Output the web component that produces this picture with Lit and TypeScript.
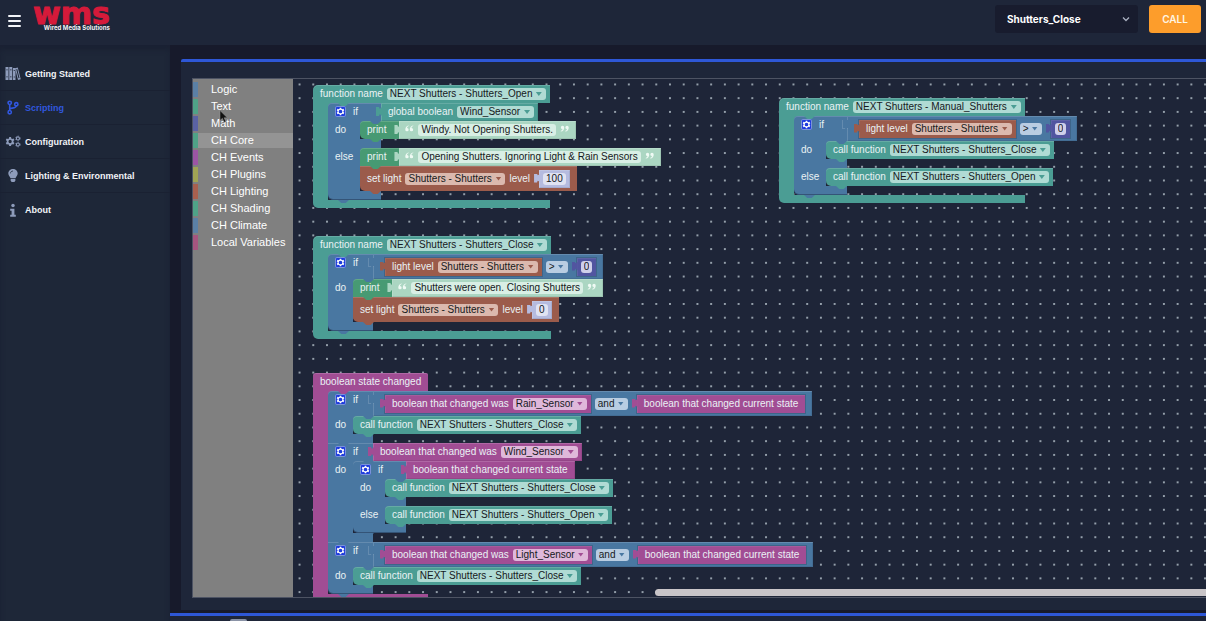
import { LitElement, html, svg, css, type TemplateResult } from "lit";
import { customElement, state } from "lit/decorators.js";

type Part = TemplateResult | string;

/* ---------- block fields ---------- */

const label = (text: string) => html`<span class="label">${text}</span>`;

const field = (value: string, name: string) => html`
  <span class="field"><select aria-label=${name}><option>${value}</option></select></span>`;

const entry = (value: string, name: string) =>
  html`<input class="entry" type="text" aria-label=${name} .value=${value} />`;

const quote = (closing = false) => html`
  <svg class="quote" viewBox="0 0 16 12" aria-hidden="true">
    <g transform=${closing ? "rotate(180 8 6)" : ""}>
      ${svg`<path d="M6.5 0.5C2.5 1.5 0.5 4 0.5 8a3 3 0 1 0 3-3C3.9 3.4 4.9 2.3 6.8 1.6zM14.5 0.5c-4 1-6 3.500-6 7.500a3 3 0 1 0 3-3c.4-1.600 1.400-2.700 3.300-3.400z"/>`}
    </g>
  </svg>`;

const cog = html`
  <button class="cog" type="button" aria-label="Edit branches">
    <svg viewBox="0 0 16 16" aria-hidden="true">
      <path fill="#fff" fill-rule="evenodd" d="M6.900 2h2.200l.4 1.700 1 .5 1.700-.600 1.300 2-1.200 1.300v1.200l1.200 1.300-1.300 2-1.700-.600-1 .5-.4 1.700H6.900l-.4-1.700-1-.5-1.700.6-1.300-2 1.200-1.300V6.900L2.500 5.600l1.300-2 1.700.6 1-.5zM8 4.800a2.700 2.700 0 1 0 0 5.400 2.700 2.700 0 0 0 0-5.400z" transform="translate(0 .5)"/>
    </svg>
  </button>`;

/* ---------- blocks ---------- */

const value = (hue: string, kind: string, ...parts: Part[]) =>
  html`<div class="value ${hue} ${kind}">${parts}</div>`;

const num = (v: string, hue = "indigo") => value(hue, "num", entry(v, "number"));

const lightLevel = () =>
  value("brown", "", label("light level"), field("Shutters - Shutters", "light"));

const wasChanged = (sensor: string) =>
  value("magenta", "", label("boolean that changed was"), field(sensor, "boolean"));

const currentState = () =>
  value("magenta", "plain", label("boolean that changed current state"));

const compare = (left: Part, op: string, right: Part) =>
  value("blue", "compare", left, field(op, "operator"), right);

const call = (fn: string) => html`
  <div class="stmt teal">${label("call function")}${field(fn, "function")}</div>`;

const print = (text: string) => html`
  <div class="joined">
    <div class="stmt green print">${label("print")}</div>
    <div class="value mint text">${quote()}${entry(text, "text")}${quote(true)}</div>
  </div>`;

const setLight = (v: string) => html`
  <div class="stmt brown tall">
    ${label("set light")}${field("Shutters - Shutters", "light")}${label("level")}${num(v, "lavender")}
  </div>`;

const ifBlock = (cond: Part, doPart: Part[], elsePart?: Part[]) => {
  const branch = (name: string, parts: Part[]) => html`
    <div class="branch"><span class="arm">${name}</span><div class="stack">${parts}</div></div>
    <div class="strip"></div>`;
  return html`
    <div class="if ${elsePart ? "wide" : ""}">
      <div class="joined"><div class="if-head">${cog}<span class="label">if</span></div>${cond}</div>
      ${branch("do", doPart)}${elsePart ? branch("else", elsePart) : ""}
    </div>`;
};

const hat = (hue: string, place: string, head: Part[], body: Part[]) => html`
  <section class="hat ${hue} ${place}">
    <div class="hat-head">${head}</div>
    <div class="hat-body"><div class="hat-arm"></div><div class="stack">${body}</div></div>
    <div class="hat-foot"></div>
  </section>`;

const fn = (place: string, name: string, body: Part[]) =>
  hat("teal", place, [label("function name"), field(name, "function name")], body);

const CLOSE = "NEXT Shutters - Shutters_Close";
const OPEN = "NEXT Shutters - Shutters_Open";

/* ---------- navigation icons ---------- */

const icons: Record<string, TemplateResult> = {
  books: html`<svg viewBox="0 0 32 28" fill="currentColor"><path fill-rule="evenodd" d="M1 1h6v26H1zM2.500 6v1.500h3V6zm0 14v1.500h3V20zM8.500 1h6v26h-6zM10 6v1.500h3V6zm0 14v1.500h3V20z"/><path fill-rule="evenodd" d="M16 3h5v24h-5zm1.500 4v2h2V7zm0 13v2h2v-2z"/><path fill-rule="evenodd" d="M20 3.500 25.500 2 31.500 25.500 26 27zM22.500 5.500 27 23.500l2-.5L24.500 5z"/></svg>`,
  branch: html`<svg viewBox="0 0 28 32" fill="none" stroke="currentColor" stroke-width="3.400"><circle cx="7" cy="6" r="3.500"/><circle cx="7" cy="26" r="3.500"/><circle cx="21" cy="9" r="3.500"/><path d="M7 9.500v13M7 20c0-4 14-1 14-7.500"/></svg>`,
  cogs: html`<svg viewBox="0 0 36 28" fill="currentColor"><path fill-rule="evenodd" d="M9.500 4h4l.7 3 2 1.100 3-.9 2 3.500-2.300 2.200v2.300l2.300 2.200-2 3.500-3-.9-2 1.100-.7 3h-4l-.7-3-2-1.100-3 .9-2-3.500 2.300-2.200v-2.300L1.800 10.700l2-3.500 3 .9 2-1.100zM11.500 10.300a3.700 3.700 0 1 0 0 7.400 3.700 3.700 0 0 0 0-7.400z"/><g fill="none" stroke="currentColor"><circle cx="29" cy="7" r="3.500" stroke-width="2.500"/><circle cx="29" cy="21" r="3.500" stroke-width="2.500"/><circle cx="29" cy="7" r="5.300" stroke-width="1.600" stroke-dasharray="2.500 3"/><circle cx="29" cy="21" r="5.300" stroke-width="1.600" stroke-dasharray="2.500 3"/></g></svg>`,
  bulb: html`<svg viewBox="0 0 28 32" fill="currentColor"><path d="M14 2c5.500 0 10 4.300 10 9.700 0 4.300-3.500 6.300-4.700 10.300H8.700C7.500 18 4 16 4 11.700 4 6.300 8.500 2 14 2z"/><path d="M9 23.500h10v3L17 30h-6l-2-3.500z"/><path d="M8.500 11.500c0-3 2.500-5 5.500-5" fill="none" stroke="#1e2738" stroke-width="1.600"/></svg>`,
  info: html`<svg viewBox="0 0 28 32" fill="currentColor"><circle cx="14" cy="5.500" r="3.700"/><path d="M8 12h9v13h3v4.500H8V25h3v-8.500H8z"/></svg>`,
};

const NAV = [
  ["books", "Getting Started"],
  ["branch", "Scripting"],
  ["cogs", "Configuration"],
  ["bulb", "Lighting & Environmental"],
  ["info", "About"],
];

const CATEGORIES = [
  ["c-blue", "Logic"],
  ["c-green", "Text"],
  ["c-indigo", "Math"],
  ["c-green", "CH Core"],
  ["c-purple", "CH Events"],
  ["c-olive", "CH Plugins"],
  ["c-red", "CH Lighting"],
  ["c-green", "CH Shading"],
  ["c-blue", "CH Climate"],
  ["c-rose", "Local Variables"],
];

@customElement("app-root")
export class AppRoot extends LitElement {
  @state() private page = "Scripting";
  @state() private category = "CH Core";

  static styles = css`
    :host {
      display: flex;
      flex-direction: column;
      height: 100vh;
      overflow: hidden;
      background: #171a2b;
      color: #fff;
      font: 10px/18px "Liberation Sans", Arial, sans-serif;
    }
    *, *::before, *::after { box-sizing: border-box; }
    button, select, input { font: inherit; color: inherit; border: 0; margin: 0; padding: 0; }
    select { appearance: none; cursor: pointer; }
    svg { display: block; }

    /* top bar */
    .top {
      display: flex;
      align-items: flex-start;
      flex: 0 0 45px;
      padding: 5px 5px 0 8px;
      background: #1e2639;
    }
    .menu { display: grid; gap: 2px; width: 13px; margin-top: 10px; background: none; }
    .menu i { height: 2px; background: #f2f4f8; border-radius: 1px; }
    .menu i + i { margin-top: 1px; }
    .logo { margin: 0 auto 0 12px; display: grid; }
    .logo b {
      height: 20px;
      font: bold 30px/18px "DejaVu Sans", sans-serif;
      color: #d51a3a;
      -webkit-text-stroke: 1px #d51a3a;
    }
    .logo small { font: 700 6px/6px Inter, sans-serif; color: #f3f3f6; text-align: right; }
    .picker { position: relative; width: 143px; margin-right: 11px; }
    .picker select {
      width: 100%;
      height: 28px;
      padding: 0 24px 0 12px;
      border-radius: 3px;
      background: #181c2e;
      font: 700 10px Inter, sans-serif;
    }
    .picker svg { position: absolute; right: 8px; top: 10px; width: 8px; height: 8px; pointer-events: none; }
    .run {
      width: 52px;
      height: 28px;
      border-radius: 3px;
      background: #fd9d2b;
      font: 600 10px Inter, sans-serif;
      color: #fff5e2;
    }

    .page { display: flex; flex: 1; min-height: 0; }

    /* side navigation */
    nav { flex: 0 0 170px; padding-top: 12px; background: #1e2738; box-shadow: inset 0 5px 5px #1a2133; }
    nav a {
      display: flex;
      align-items: center;
      gap: 4px;
      height: 34px;
      padding-left: 5px;
      border-bottom: 1px solid #1a2132;
      color: #f1f3f7;
      font-weight: bold;
      font-size: 9px;
      text-decoration: none;
    }
    nav a:last-child { border-bottom: 0; }
    nav svg { width: 16px; height: 15px; color: #8e9cbb; }
    nav a.on, nav a.on svg { color: #3157de; }

    /* main panel */
    main { display: flex; flex-direction: column; flex: 1; min-width: 0; padding-top: 14px; }
    .card {
      display: flex;
      flex: 1;
      min-height: 0;
      margin: 0 0 3px 11px;
      padding: 16px 0 12px 11px;
      border-top: 3px solid #2e57d6;
      background: #1e2639;
      border-radius: 2px 0 0 0;
    }
    .next { display: flex; flex: 0 0 8px; padding: 3px 0 0 60px; border-top: 3px solid #2e57d6; background: #1e2538; }
    .next i { width: 17px; background: #8b93a6; border-radius: 2px 2px 0 0; }

    .editor { display: flex; flex: 1; min-width: 0; border: 1px solid #4d5363; border-right: 0; }
    .toolbox { position: relative; flex: 0 0 100px; padding-top: 3px; background: #808080; }
    .toolbox button {
      display: block;
      width: 100%;
      height: 15px;
      margin-bottom: 2px;
      padding-left: 13px;
      border-left: 5px solid var(--tint);
      background: none;
      font-size: 11px;
      line-height: 15px;
      text-align: left;
      white-space: nowrap;
    }
    .toolbox button.on { background: #949494; }
    .c-blue { --tint: #5b80a5; }
    .c-green { --tint: #4fa287; }
    .c-indigo { --tint: #5a62a4; }
    .c-purple { --tint: #9c55a4; }
    .c-olive { --tint: #a0a454; }
    .c-red { --tint: #a8604f; }
    .c-rose { --tint: #a5557f; }
    .pointer { position: absolute; left: 26px; top: 31px; width: 9px; height: 13px; }

    .canvas { position: relative; flex: 1; min-width: 0; overflow: hidden; background: #1e2538; }
    .grid { position: absolute; inset: 0; width: 100%; height: 100%; }
    .scroll {
      position: absolute;
      left: 362px;
      right: 0;
      bottom: 1px;
      height: 7px;
      border-radius: 4px 0 0 4px;
      background: #c9c5c8;
    }

    /* block colours */
    .teal { --c: #4b9d94; --f: #b0dbd4; }
    .green { --c: #479a73; --f: #d3ecdf; }
    .blue, .if { --c: #4977a1; --f: #b9cde2; }
    .brown { --c: #9b5b4b; --f: #dbb9ae; }
    .magenta { --c: #a14d94; --f: #dfb8da; }
    .indigo { --c: #5155a0; --f: #cfd0ea; }
    .lavender { --c: #b5bbdf; --f: #e0e3f2; }
    .mint { --c: #abd6c2; --f: #d9efe5; }

    /* block parts */
    .label { white-space: pre; color: #eaf2f4; }
    .field { position: relative; display: flex; }
    .field::after {
      content: "";
      position: absolute;
      right: 4px;
      top: 4px;
      width: 6px;
      height: 4px;
      background: var(--c);
      clip-path: polygon(0 0, 100% 0, 50% 100%);
    }
    .field select, .entry {
      height: 12px;
      border-radius: 3px;
      background: var(--f);
      color: #16191c;
      line-height: 12px;
    }
    .field select { padding: 0 13px 0 3px; }
    .entry { field-sizing: content; min-width: 0; padding: 0 3px; }
    .quote { width: 9px; height: 7px; margin-bottom: 3px; fill: #effaf4; }
    .cog { width: 11px; height: 11px; border-radius: 2px; background: #1d3bdd; box-shadow: 0 0 0 1px #7b93d8 inset; }
    .cog svg { width: 11px; height: 11px; }

    .joined { display: flex; align-items: flex-start; width: max-content; position: relative; }
    .value, .stmt { display: flex; align-items: center; gap: 4px; height: 18px; background: var(--c); }
    .value {
      position: relative;
      padding: 0 4px 0 7px;
      box-shadow: inset 1px 1px 0 #ffffff26, inset -1px -1px 0 #00000014;
    }
    .value::before {
      content: "";
      position: absolute;
      left: -5px;
      top: 4px;
      width: 6px;
      height: 9px;
      background: var(--c);
      clip-path: polygon(100% 0, 80% 15%, 60% 20%, 50% 0, 0 0, 0 100%, 50% 100%, 60% 80%, 80% 85%, 100% 100%);
    }
    .plain { padding-right: 7px; }
    .num { padding: 0 4px; margin-left: 5px; }
    .text { padding: 0 7px 0 6px; }
    .compare { height: 25px; padding: 0 7px 0 12px; }
    .compare .plain { margin-left: 5px; }
    .compare > .value { box-shadow: inset 1px 1px 0 #ffffff14, 0 0 0 1px #00000026; }
    .compare::before { background: #ffffff26; }
    .compare::after {
      content: "";
      position: absolute;
      left: -4px;
      top: 4px;
      width: 5px;
      height: 8px;
      background: var(--c);
    }

    .stmt {
      position: relative;
      width: max-content;
      padding: 0 4px 0 7px;
      box-shadow: inset 0 1px 0 #ffffff26;
    }
    .tall { height: 25px; padding-right: 7px; }
    .print { padding-right: 13px; }
    .stmt::after, .hat-head::after, .if-head::after, .if::after {
      content: "";
      position: absolute;
      z-index: 1;
      left: 10px;
      bottom: -3px;
      width: 11px;
      height: 3px;
      background: var(--c);
      clip-path: polygon(0 0, 100% 0, 70% 100%, 30% 100%);
    }
    .stack { flex: none; background: linear-gradient(var(--c), var(--c)) 0 0 / 6px 6px no-repeat; }
    .stack > :first-child, .stack > :first-child > .stmt { border-top-left-radius: 4px; }
    .stack > .stmt:last-child, .stack > .joined:last-child > .stmt { border-bottom-left-radius: 5px; }

    .if { position: relative; width: max-content; }
    .if-head {
      position: relative;
      display: flex;
      align-items: flex-start;
      align-self: stretch;
      gap: 7px;
      width: 45px;
      padding: 0 0 0 7px;
      background: var(--c);
      box-shadow: inset 0 1px 0 #ffffff26;
    }
    .if-head .cog { margin-top: 3px; }
    .if-head::after { left: 35px; }
    .if:first-child .if-head { border-top-left-radius: 4px; }
    .branch { display: flex; }
    .arm { flex: 0 0 25px; padding-left: 7px; background: var(--c); color: #eaf2f4; }
    .strip { width: 45px; height: 9px; background: var(--c); }
    .wide > .strip { width: 53px; }
    .wide > .joined > .if-head { width: 53px; }
    .wide > .joined > .if-head::after { left: 42px; }
    .wide > .branch > .arm { flex-basis: 32px; }
    .if:last-child > .strip:last-child { border-bottom-left-radius: 5px; box-shadow: inset 0 -1px 0 #16203a66; }

    .hat { position: absolute; display: grid; width: max-content; }
    .hat-head {
      position: relative;
      display: flex;
      align-items: center;
      gap: 4px;
      height: 18px;
      padding: 0 4px 0 7px;
      background: var(--c);
      border-radius: 5px 0 0 0;
      box-shadow: inset 0 1px 0 #ffffff26;
    }
    .hat-head::after { left: 25px; }
    .hat-body { display: flex; width: 0; }
    .hat-arm { flex: 0 0 15px; background: var(--c); }
    .hat-foot { height: 8px; background: var(--c); border-radius: 0 0 0 5px; }
    .hat.magenta .hat-head { padding-right: 7px; border-radius: 3px 2px 0 0; }

    /* where each stack was dropped on the canvas */
    .at-open { left: 20px; top: 6px; }
    .at-close { left: 20px; top: 157px; }
    .at-manual { left: 486px; top: 19px; }
    .at-state { left: 20px; top: 294px; }
  `;

  render() {
    return html`
      <header class="top">
        <button class="menu" type="button" aria-label="Menu"><i></i><i></i><i></i></button>
        <div class="logo"><b>wms</b><small>Wired Media Solutions</small></div>
        <div class="picker">
          <select aria-label="Function to call"><option>Shutters_Close</option></select>
          <svg viewBox="0 0 8 8" fill="none" stroke="#a9b0c0" stroke-width="1.300"><path d="M1 2.500 4 5.500 7 2.500"/></svg>
        </div>
        <button class="run" type="button">CALL</button>
      </header>
      <div class="page">
        <nav aria-label="Main">
          ${NAV.map(([icon, name]) => html`
            <a href="#" class=${this.page === name ? "on" : ""} @click=${() => (this.page = name)}>${icons[icon]}<span>${name}</span></a>`)}
        </nav>
        <main>
          <div class="card">
            <div class="editor">
              <div class="toolbox">
                ${CATEGORIES.map(([tint, name]) => html`
                  <button type="button" class="${tint} ${this.category === name ? "on" : ""}"
                    @click=${() => (this.category = name)}>${name}</button>`)}
                <svg class="pointer" viewBox="0 0 9 13" aria-hidden="true"><path d="M1 .5v10l2.400-2.200 1.700 4 1.700-.8-1.700-3.700h3.200z" fill="#111" stroke="#999" stroke-width=".5"/></svg>
              </div>
              <div class="canvas">
                <svg class="grid" aria-hidden="true">
                  <defs>
                    <pattern id="dots" width="20" height="20" patternUnits="userSpaceOnUse" patternTransform="translate(-.3 -1.400) scale(.686)">
                      <circle cx="10" cy="10" r="1.500" fill="#b3bfc8"/>
                    </pattern>
                  </defs>
                  <rect width="100%" height="100%" fill="url(#dots)"/>
                </svg>
                ${fn("at-open", OPEN, [
                  ifBlock(
                    value("teal", "", label("global boolean"), field("Wind_Sensor", "boolean")),
                    [print("Windy. Not Opening Shutters.")],
                    [print("Opening Shutters. Ignoring Light & Rain Sensors"), setLight("100")],
                  ),
                ])}
                ${fn("at-close", CLOSE, [
                  ifBlock(compare(lightLevel(), ">", num("0")), [
                    print("Shutters were open. Closing Shutters"),
                    setLight("0"),
                  ]),
                ])}
                ${fn("at-manual", "NEXT Shutters - Manual_Shutters", [
                  ifBlock(compare(lightLevel(), ">", num("0")), [call(CLOSE)], [call(OPEN)]),
                ])}
                ${hat("magenta", "at-state", [label("boolean state changed")], [
                  ifBlock(compare(wasChanged("Rain_Sensor"), "and", currentState()), [call(CLOSE)]),
                  ifBlock(wasChanged("Wind_Sensor"), [ifBlock(currentState(), [call(CLOSE)], [call(OPEN)])]),
                  ifBlock(compare(wasChanged("Light_Sensor"), "and", currentState()), [call(CLOSE)]),
                ])}
                <div class="scroll"></div>
              </div>
            </div>
          </div>
          <div class="next"><i></i></div>
        </main>
      </div>`;
  }
}
